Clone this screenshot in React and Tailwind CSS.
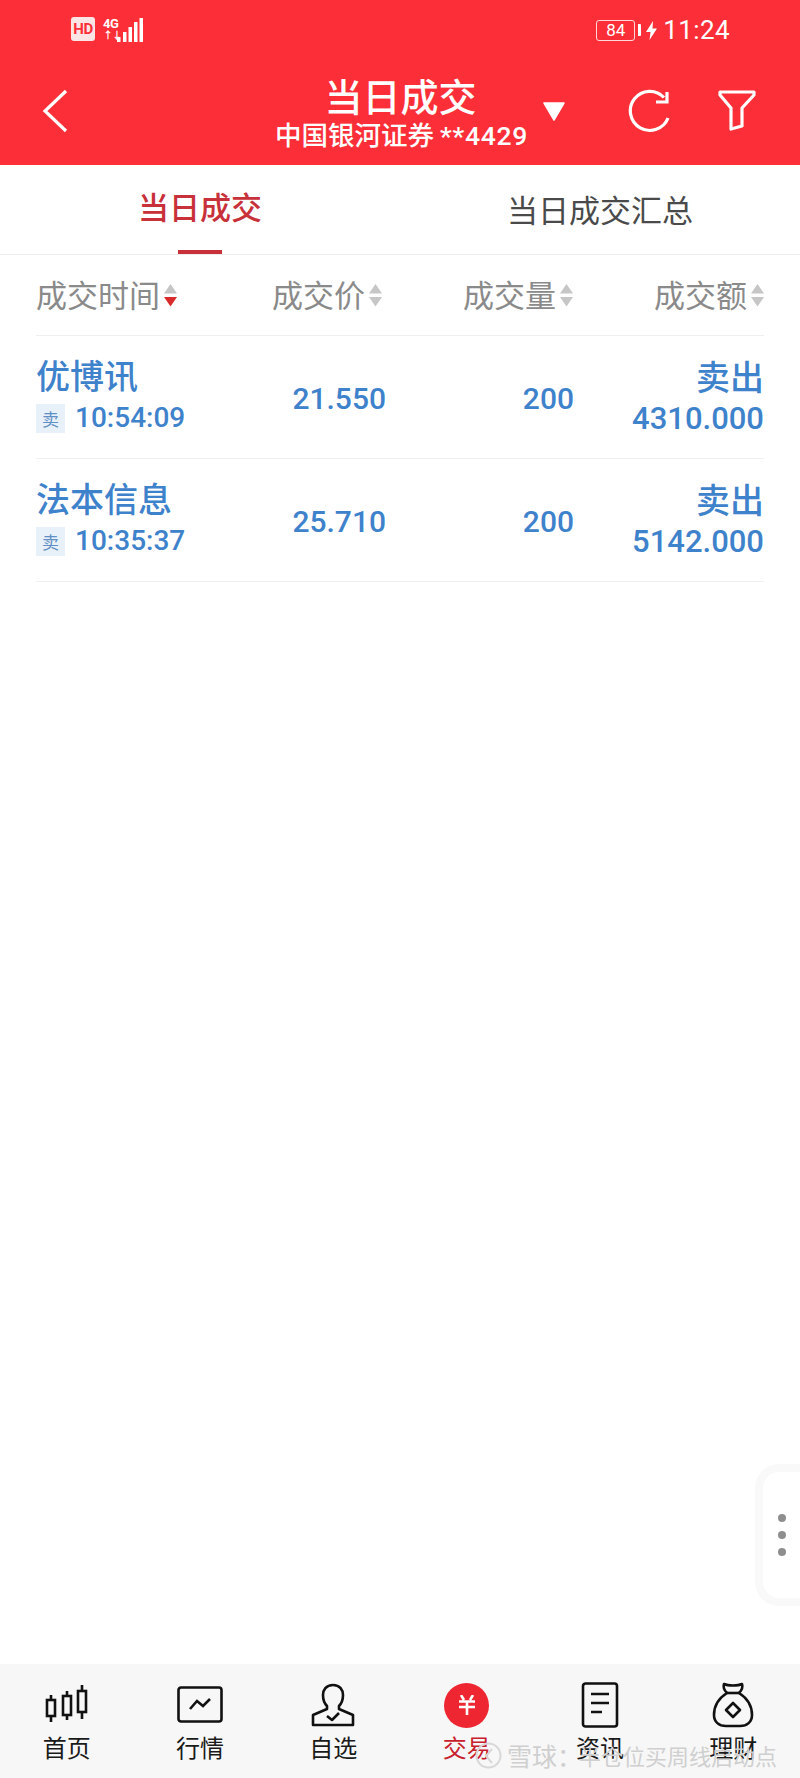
const cjk = "font-['Noto_Sans_CJK_SC','Noto_Sans',sans-serif]";
const num = "font-['Roboto','Noto_Sans_CJK_SC',sans-serif]";

const trades = [
  { name: '优博讯', time: '10:54:09', price: '21.550', qty: '200', amount: '4310.000' },
  { name: '法本信息', time: '10:35:37', price: '25.710', qty: '200', amount: '5142.000' },
];

function SortIcon({ active }) {
  return (
    <svg width="13" height="23" viewBox="0 0 13 23" className="ml-[4px] shrink-0">
      <path d="M6.5 0 L13 9.5 H0 Z" fill="#c6c6c6" />
      <path d="M0 13 H13 L6.5 22.5 Z" fill={active ? '#d92b2b' : '#c6c6c6'} />
    </svg>
  );
}

function HeaderCell({ label, active, className }) {
  return (
    <div className={`flex items-center ${className}`}>
      <span className="text-[31px] leading-[40px] text-[#8a8a8a] -mt-[2px]">{label}</span>
      <SortIcon active={active} />
    </div>
  );
}

function TradeRow({ name, time, price, qty, amount }) {
  return (
    <div className="grid grid-cols-[200px_150px_188px_190px] h-[123px] items-center border-b border-[#efefef] text-[#3f82cc]">
      <div className="flex flex-col mb-[5px]">
        <span className="text-[34px] leading-[44px] font-medium">{name}</span>
        <div className="flex items-center h-[36px] mt-[3px]">
          <span className="w-[29px] h-[29px] bg-[#e8f0fa] text-[#5f8fc4] text-[17px] leading-[29px] text-center">卖</span>
          <span className={`${num} text-[28px] leading-[36px] ml-[10px] font-medium`}>{time}</span>
        </div>
      </div>
      <span className={`${num} text-[30px] text-right font-medium mt-[2px]`}>{price}</span>
      <span className={`${num} text-[30px] text-right font-medium mt-[2px]`}>{qty}</span>
      <div className="flex flex-col items-end">
        <span className="text-[34px] leading-[42px] font-medium">卖出</span>
        <span className={`${num} text-[31px] leading-[40px] mt-[2px] font-medium`}>{amount}</span>
      </div>
    </div>
  );
}

function NavItem({ label, active, children }) {
  return (
    <div className="flex flex-col items-center">
      <div className="h-[48px] w-[50px] flex items-center justify-center">{children}</div>
      <span className={`text-[24px] leading-[30px] mt-[3px] ${active ? 'text-[#c8202c]' : 'text-[#1a1a1a]'}`}>{label}</span>
    </div>
  );
}

export default function App() {
  return (
    <div className={`${cjk} relative w-[800px] h-[1778px] bg-white flex flex-col overflow-hidden`}>
      {/* 顶部红色区域 */}
      <header className="h-[165px] bg-[#fc2f38] text-white flex flex-col shrink-0">
        <div className="h-[60px] flex items-center pl-[71px] pr-[70px] justify-between">
          <div className="flex items-center -mt-[2px]">
            <span className={`${num} w-[24px] h-[24px] bg-[#fde4e5] rounded-[3px] text-[#fc2f38] text-[15px] font-bold leading-[24px] text-center tracking-[-0.5px]`}>HD</span>
            <div className={`${num} flex flex-col w-[14px] ml-[8px] text-[13px] font-bold leading-[13px]`}>
              <span className="tracking-[-0.5px]">4G</span>
              <span className="text-[10px] leading-[11px] tracking-[-1px]">↑↓</span>
            </div>
            <svg width="26" height="25" viewBox="0 0 26 25" fill="#fff">
              <rect x="0" y="20" width="3.5" height="5" />
              <rect x="6" y="15" width="3.5" height="10" />
              <rect x="11.5" y="10" width="3.5" height="15" />
              <rect x="17" y="5" width="3.5" height="20" />
              <rect x="22.5" y="1" width="3.5" height="24" />
            </svg>
          </div>
          <div className="flex items-center">
            <span className={`${num} w-[39px] h-[21px] border border-[#ffd7d9] rounded-[3px] text-[17px] leading-[19px] text-center`}>84</span>
            <span className="w-[3px] h-[12px] bg-white ml-[3px] rounded-r-[1px]" />
            <svg width="11" height="19" viewBox="0 0 11 19" className="ml-[5px]" fill="#fff">
              <path d="M7 0 L0 11 H4.5 L3.5 19 L11 7.5 H6.5 Z" />
            </svg>
            <span className={`${num} text-[26px] ml-[6px] tracking-[0.4px]`}>11:24</span>
          </div>
        </div>
        <div className="flex-1 flex items-start">
          <svg width="26" height="44" viewBox="0 0 26 44" className="ml-[42px] mt-[29px] shrink-0" fill="none" stroke="#fff" strokeWidth="3.2">
            <path d="M24 2 L3 22 L24 42" />
          </svg>
          <div className="ml-[209px] w-[249px] shrink-0 flex flex-col items-center">
            <span className="text-[38px] leading-[48px] font-medium mt-[11px] -ml-[2px] whitespace-nowrap">当日成交</span>
            <span className="text-[26.5px] leading-[32px] font-medium -mt-[1px] whitespace-nowrap">
              中国银河证券 <span className={`${num} tracking-[0.7px]`}>**4429</span>
            </span>
          </div>
          <svg width="24" height="20" viewBox="0 0 24 20" className="mt-[42px] ml-[16px] shrink-0" fill="#fff" stroke="#fff" strokeWidth="1.5" strokeLinejoin="round">
            <path d="M2 1 H22 L12 18 Z" />
          </svg>
          <svg width="44" height="46" viewBox="0 0 44 46" className="mt-[28px] ml-[62px] shrink-0" fill="none" stroke="#fff" strokeWidth="3.2">
            <path d="M40 30 A19.5 19.5 0 1 1 36 9.5" />
            <path d="M39 4 V14 H28" />
          </svg>
          <svg width="38" height="42" viewBox="0 0 38 42" className="mt-[29px] ml-[46px] shrink-0" fill="none" stroke="#fff" strokeWidth="3.2" strokeLinejoin="round">
            <path d="M2 3 H36 V6 L24 19 V37 L13 40 V19 L2 6 Z" />
          </svg>
        </div>
      </header>

      {/* Tab */}
      <div className="h-[90px] shrink-0 flex border-b border-[#ececec]">
        <div className="relative w-[400px] flex justify-center">
          <span className="text-[31px] leading-[40px] mt-[21px] font-medium text-[#c8303a]">当日成交</span>
          <span className="absolute bottom-0 left-[178px] w-[44px] h-[4px] bg-[#c8303a]" />
        </div>
        <div className="w-[400px] flex justify-center">
          <span className="text-[31px] leading-[40px] mt-[24px] text-[#4a4a4a]">当日成交汇总</span>
        </div>
      </div>

      {/* 表格 */}
      <div className="mx-[36px] flex-1">
        <div className="grid grid-cols-[200px_150px_188px_190px] h-[81px] items-center border-b border-[#efefef]">
          <HeaderCell label="成交时间" active className="justify-start" />
          <HeaderCell label="成交价" className="justify-end pr-[4px]" />
          <HeaderCell label="成交量" className="justify-end pr-[1px]" />
          <HeaderCell label="成交额" className="justify-end" />
        </div>
        {trades.map((t) => (
          <TradeRow key={t.name} {...t} />
        ))}
      </div>

      {/* 底部导航 */}
      <nav className="h-[114px] shrink-0 bg-[#f7f7f7] grid grid-cols-6 pt-[17px]">
        <NavItem label="首页">
          <svg width="46" height="40" viewBox="0 0 46 40" fill="none" stroke="#111" strokeWidth="2.6">
            <rect x="3" y="15" width="8" height="16" />
            <path d="M7 10 V15 M7 31 V37" />
            <rect x="19" y="11" width="8" height="19" />
            <path d="M23 6 V11 M23 30 V35" />
            <rect x="34" y="6" width="8" height="21" />
            <path d="M38 0 V6 M38 27 V34" />
          </svg>
        </NavItem>
        <NavItem label="行情">
          <svg width="46" height="38" viewBox="0 0 46 38" fill="none" stroke="#111" strokeWidth="2.6">
            <rect x="1.5" y="1.5" width="43" height="34" rx="2.5" />
            <path d="M13 23 L20 15 L26 20 L33 13" />
          </svg>
        </NavItem>
        <NavItem label="自选">
          <svg width="46" height="44" viewBox="0 0 46 44" fill="none" stroke="#111" strokeWidth="2.6" strokeLinejoin="round">
            <path d="M23 2 C16 2 13 7 13 12 C13 17 15 21 17 23 V26 L3 32 V42 H43 V32 L29 26 V23 C31 21 33 17 33 12 C33 7 30 2 23 2 Z" />
            <path d="M17 33 L22 37 L29 30" />
          </svg>
        </NavItem>
        <NavItem label="交易" active>
          <div className="w-[45px] h-[45px] rounded-full bg-[#ed2632] flex items-center justify-center">
            <svg width="18" height="20" viewBox="0 0 18 20" fill="none" stroke="#fff" strokeWidth="2.6">
              <path d="M3 0 L6 5 M15 0 L12 5 M1 6.5 H17 M1 12 H17 M9 6.5 V20" />
            </svg>
          </div>
        </NavItem>
        <NavItem label="资讯">
          <svg width="38" height="46" viewBox="0 0 38 46" fill="none" stroke="#111" strokeWidth="2.6">
            <rect x="2" y="1.5" width="34" height="43" rx="2.5" />
            <path d="M10 12 H28 M10 21 H28 M10 30 H21" />
          </svg>
        </NavItem>
        <NavItem label="理财">
          <svg width="42" height="46" viewBox="0 0 42 46" fill="none" stroke="#111" strokeWidth="2.6" strokeLinejoin="round">
            <path d="M12 2 C16 4 26 4 30 2 C31 5 30 8 27 11 C35 16 40 24 40 33 C40 40 35 44 28 44 H14 C7 44 2 40 2 33 C2 24 7 16 15 11 C12 8 11 5 12 2 Z" />
            <path d="M15 11 H27" />
            <path d="M21 21 L28 28 L21 35 L14 28 Z" />
          </svg>
        </NavItem>
      </nav>

      {/* 右侧悬浮把手 */}
      <div className="absolute left-[755px] top-[1464px] w-[70px] h-[142px] bg-white rounded-[24px] border-[8px] border-[#f9f9f9] flex flex-col items-start pl-[15px] justify-center gap-[9px]">
        <span className="w-[8px] h-[8px] rounded-full bg-[#8e8e8e]" />
        <span className="w-[8px] h-[8px] rounded-full bg-[#8e8e8e]" />
        <span className="w-[8px] h-[8px] rounded-full bg-[#8e8e8e]" />
      </div>

      {/* 水印 */}
      <div className="absolute left-[475px] top-[1740px] flex items-center text-[#cfcfcf] pointer-events-none">
        <svg width="27" height="27" viewBox="0 0 27 27" fill="none" stroke="#d8d8d8" strokeWidth="2" className="mr-[5px]">
          <circle cx="13.5" cy="13.5" r="12" />
          <path d="M17 7 L11 14 L17 21" />
        </svg>
        <span className="text-[25px] leading-[30px]">雪球：</span>
        <span className="text-[22px] leading-[30px] -ml-[3px]">半仓位买周线启动点</span>
      </div>
    </div>
  );
}
